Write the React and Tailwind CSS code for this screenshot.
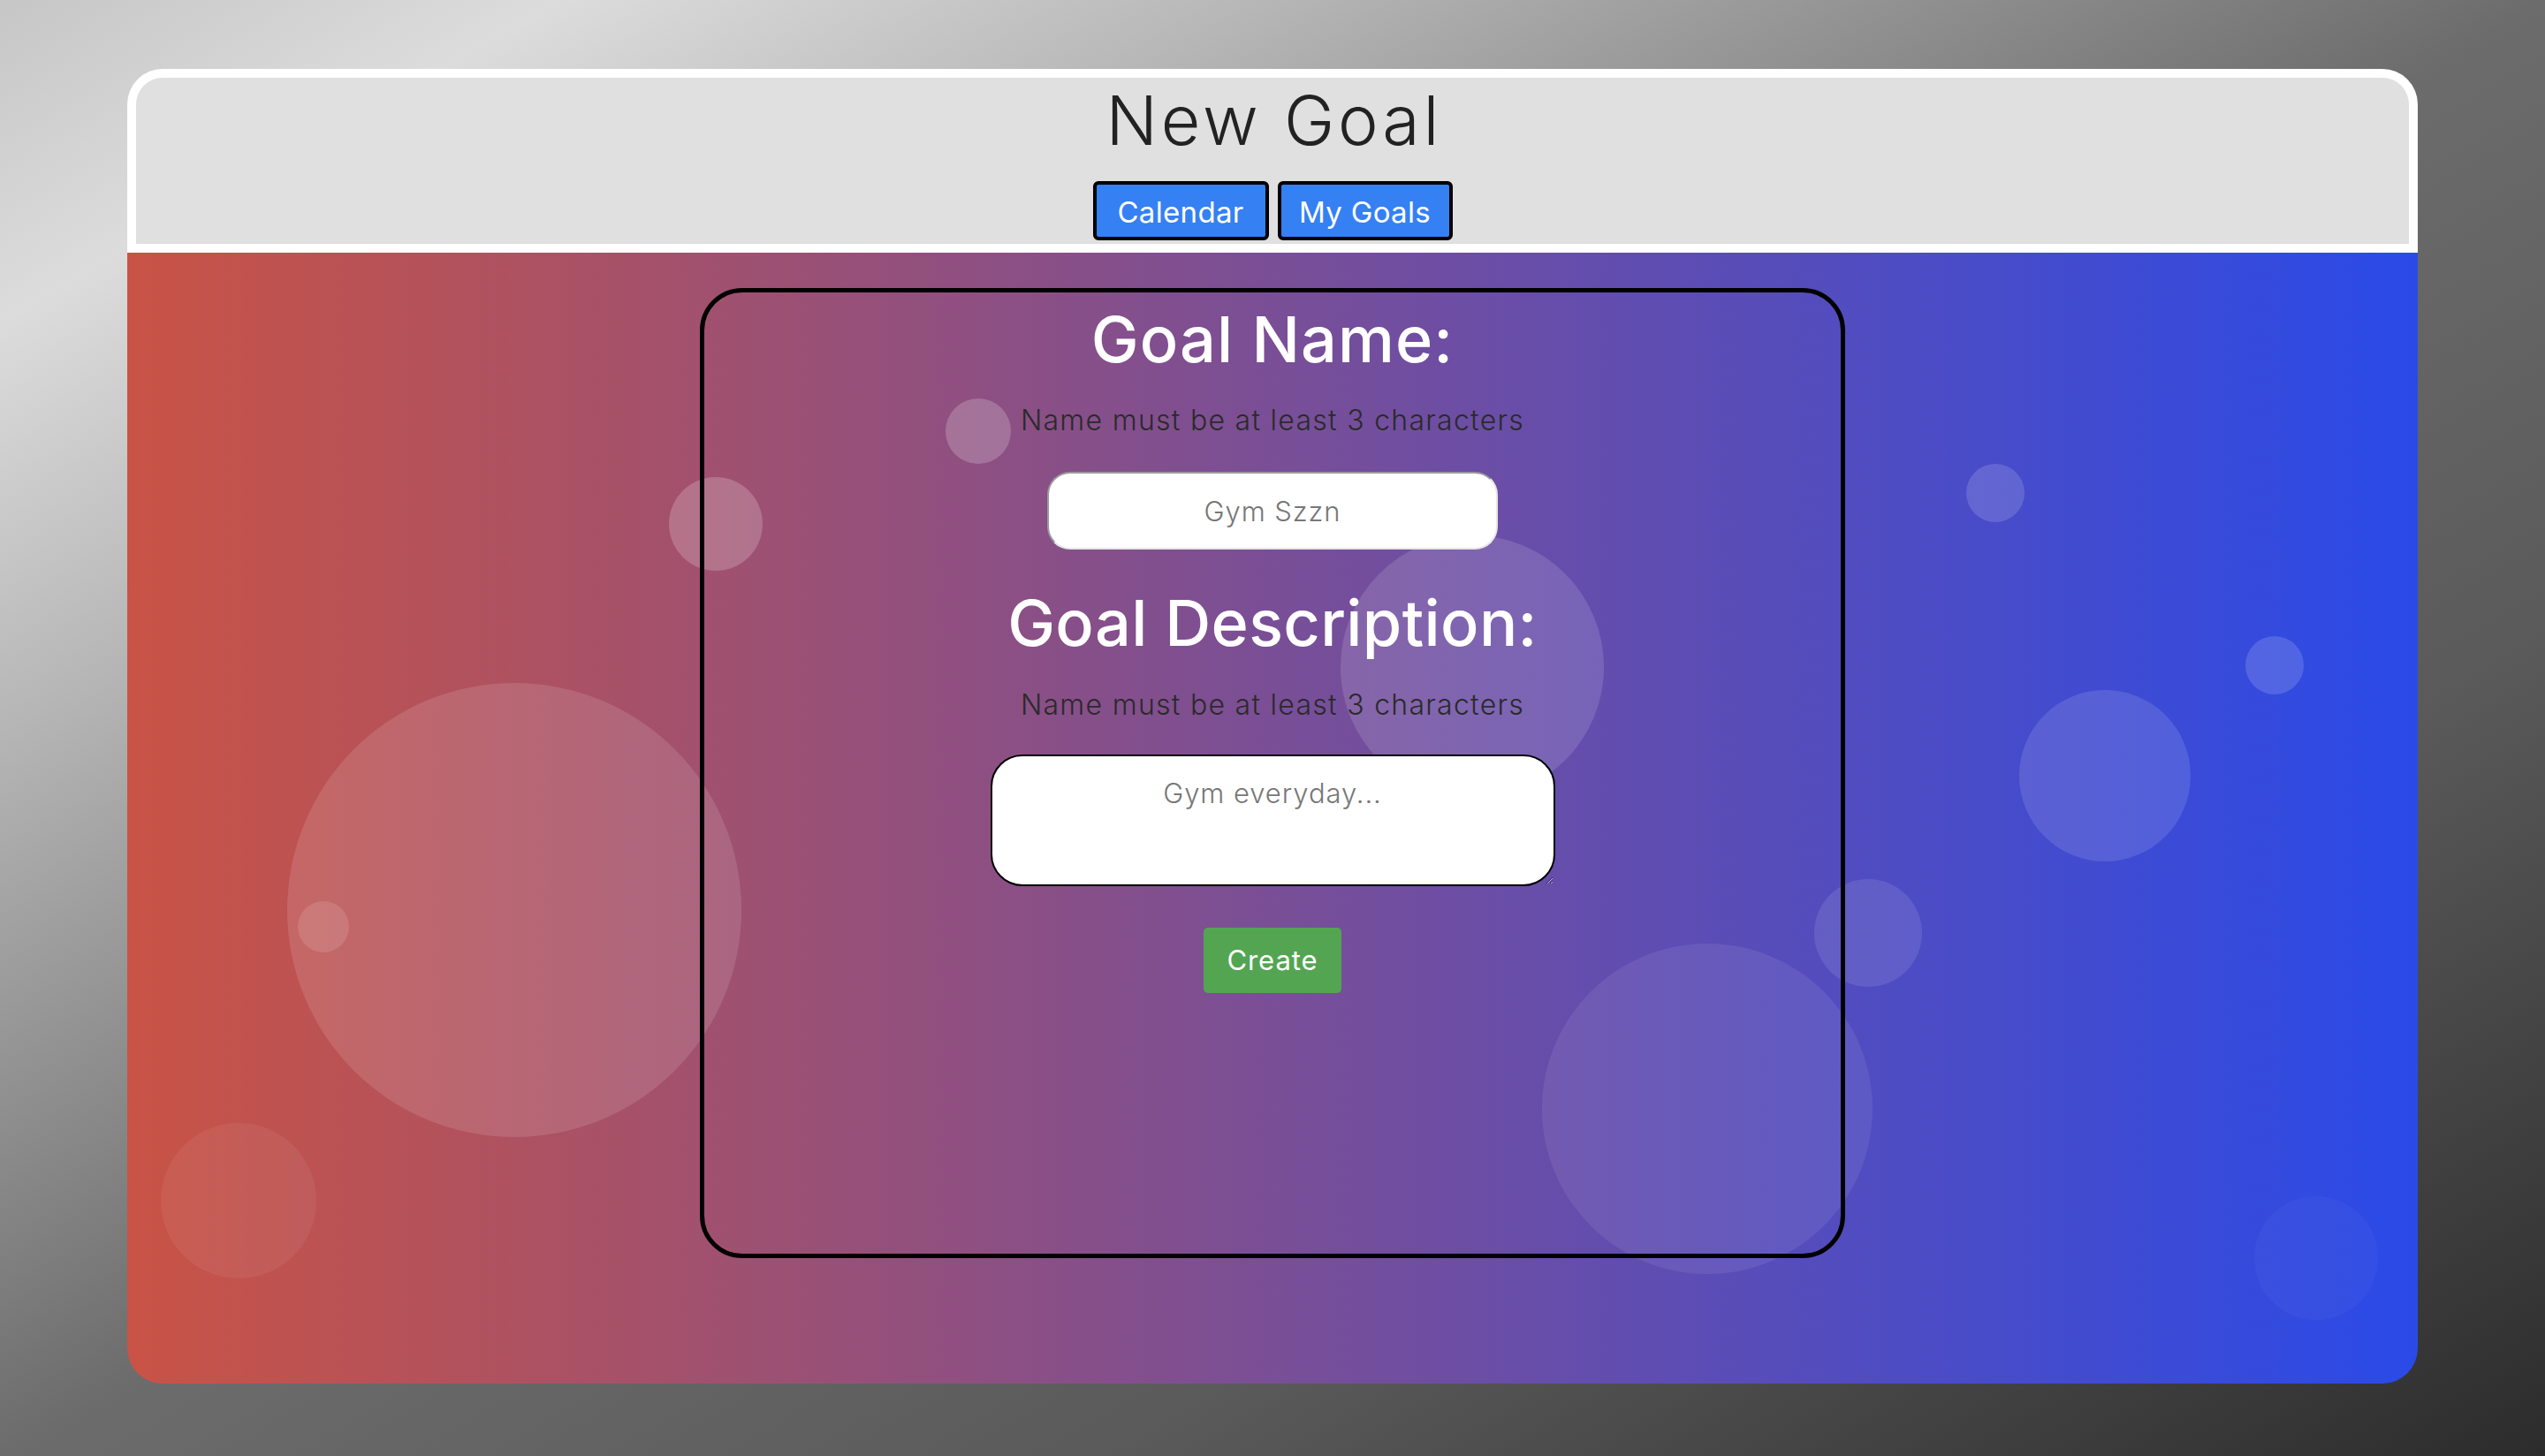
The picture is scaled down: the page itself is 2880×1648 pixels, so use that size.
import React from 'react';

const bubbles = [
  'left-[926px] top-[165px] w-[74px] h-[74px] bg-white/20',
  'left-[613px] top-[254px] w-[106px] h-[106px] bg-white/20',
  'left-[1373px] top-[320px] w-[298px] h-[298px] bg-white/[0.13]',
  'left-[181px] top-[487px] w-[514px] h-[514px] bg-white/[0.12]',
  'left-[193px] top-[734px] w-[58px] h-[58px] bg-white/[0.12]',
  'left-[38px] top-[985px] w-[176px] h-[176px] bg-white/[0.06]',
  'left-[2081px] top-[239px] w-[66px] h-[66px] bg-white/[0.15]',
  'left-[2397px] top-[434px] w-[66px] h-[66px] bg-white/[0.15]',
  'left-[2141px] top-[495px] w-[194px] h-[194px] bg-white/[0.12]',
  'left-[1909px] top-[709px] w-[122px] h-[122px] bg-white/10',
  'left-[1601px] top-[782px] w-[374px] h-[374px] bg-white/[0.08]',
  'left-[2407px] top-[1068px] w-[140px] h-[140px] bg-white/[0.03]',
];

const NavButton = ({ children, width }) => (
  <button className={`${width} h-[67px] pt-[4px] border-4 border-black rounded-[6px] bg-[#3580f3] text-white text-[33px] leading-none tracking-[0.01em]`}>
    {children}
  </button>
);

export default function App() {
  return (
    <div className="h-screen overflow-hidden bg-[linear-gradient(to_bottom_right,#c6c6c6_0%,#dcdcdc_11%,#b6b6b6_25%,#6c6c6c_50%,#5a5a5a_72%,#2c2c2c_100%)] px-[144px] pt-[78px] font-['Inter',sans-serif]">
      {/* header */}
      <div className="bg-white rounded-t-[40px] p-[10px]">
        <div className="bg-[#e0e0e0] rounded-t-[30px] h-[188px] flex flex-col items-center pt-[10px]">
          <h1 className="text-[77px] leading-none font-light text-[#222] tracking-[0.05em] pl-[0.05em]">New Goal</h1>
          <div className="flex gap-[10px] mt-[30px]">
            <NavButton width="w-[199px]">Calendar</NavButton>
            <NavButton width="w-[198px]">My Goals</NavButton>
          </div>
        </div>
      </div>

      {/* gradient body */}
      <div className="relative overflow-hidden h-[1280px] rounded-b-[40px] bg-[linear-gradient(to_right,#c95345,#2a4ae8)] pt-[40px]">
        {bubbles.map((b, i) => (
          <div key={i} className={`absolute rounded-full ${b}`} />
        ))}

        <div className="relative mx-auto w-[1296px] h-[1098px] border-[5px] border-black rounded-[48px] flex flex-col items-center">
          <h2 className="mt-[17px] text-[72px] leading-none font-medium text-white tracking-[0.015em]">Goal Name:</h2>
          <p className="mt-[40px] text-[32px] leading-none font-light text-[#2a2a2a] tracking-[0.04em]">Name must be at least 3 characters</p>
          <input
            type="text"
            placeholder="Gym Szzn"
            className="mt-[42px] w-[510px] h-[88px] rounded-[26px] bg-white border-2 border-t-[#9a9a9a] border-l-[#9a9a9a] border-b-[#e6e6e6] border-r-[#e6e6e6] text-center text-[31px] font-light tracking-[0.03em] placeholder:text-[#777]"
          />
          <h2 className="mt-[47px] text-[72px] leading-none font-medium text-white tracking-[0.005em]">Goal Description:</h2>
          <p className="mt-[41px] text-[32px] leading-none font-light text-[#2a2a2a] tracking-[0.04em]">Name must be at least 3 characters</p>
          <textarea
            placeholder="Gym everyday..."
            className="block mt-[40px] w-[639px] h-[149px] rounded-[36px] bg-white border-2 border-black text-center text-[31px] font-light tracking-[0.03em] pt-[19px] px-4 placeholder:text-[#777]"
          />
          <button className="mt-[47px] w-[156px] h-[74px] rounded-[5px] bg-[#53a552] text-white text-[31px] tracking-[0.03em]">
            Create
          </button>
        </div>
      </div>
    </div>
  );
}
